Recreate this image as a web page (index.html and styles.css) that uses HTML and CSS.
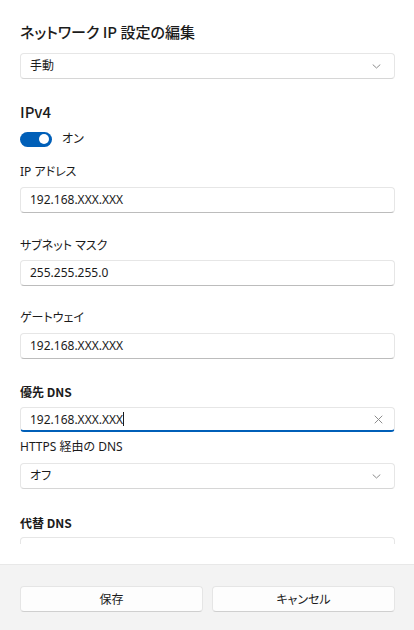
FILE: index.html
```html
<!DOCTYPE html>
<html lang="ja">
<head>
<meta charset="utf-8">
<link rel="stylesheet" href="styles.css">
</head>
<body>
<div class="dialog">
  <div class="scroll">
    <div class="content">
      <h1 class="title">ネットワーク IP 設定の編集</h1>
      <div class="combo mt9">
        <span>手動</span>
        <svg class="chev" width="9" height="5" viewBox="0 0 9 5"><path d="M1 0.8 L4.5 4 L8 0.8" fill="none" stroke="#8c8c8c" stroke-width="1" stroke-linecap="round" stroke-linejoin="round"/></svg>
      </div>
      <h2 class="section">IPv4</h2>
      <div class="toggle-row">
        <span class="toggle"><span class="knob"></span></span>
        <span class="toggle-text">オン</span>
      </div>
      <div class="label mt17">IP アドレス</div>
      <div class="field mt7">192.168.XXX.XXX</div>
      <div class="label mt25">サブネット マスク</div>
      <div class="field mt6">255.255.255.0</div>
      <div class="label mt24">ゲートウェイ</div>
      <div class="field mt7">192.168.XXX.XXX</div>
      <div class="label bold mt25">優先 DNS</div>
      <div class="field focused mt7">
        <span>192.168.XXX.XXX<span class="caret"></span></span>
        <svg class="clear" width="9" height="9" viewBox="0 0 9 9"><path d="M1 1 L8 8 M8 1 L1 8" fill="none" stroke="#8c8c8c" stroke-width="1" stroke-linecap="round"/></svg>
      </div>
      <div class="label mt7">HTTPS 経由の DNS</div>
      <div class="combo mt8">
        <span>オフ</span>
        <svg class="chev" width="9" height="5" viewBox="0 0 9 5"><path d="M1 0.8 L4.5 4 L8 0.8" fill="none" stroke="#8c8c8c" stroke-width="1" stroke-linecap="round" stroke-linejoin="round"/></svg>
      </div>
      <div class="label bold mt26">代替 DNS</div>
      <div class="field mt6"></div>
    </div>
  </div>
  <div class="spacer"></div>
  <div class="footer">
    <button class="btn">保存</button>
    <button class="btn">キャンセル</button>
  </div>
</div>
</body>
</html>
```

FILE: styles.css
```css
html, body {
  margin: 0;
  padding: 0;
  background: #ffffff;
}
body {
  font-family: "Noto Sans", "Noto Sans CJK JP", sans-serif;
  font-feature-settings: "palt";
  color: #1b1b1b;
  font-size: 12px;
}
.dialog {
  width: 414px;
  height: 630px;
  display: flex;
  flex-direction: column;
}
.scroll {
  height: 544px;
  overflow: hidden;
  flex: none;
}
.content {
  padding: 20px 19px 0 20px;
  display: flex;
  flex-direction: column;
}
.title {
  margin: 0;
  font-family: "Noto Sans CJK JP", sans-serif;
  font-size: 15px;
  line-height: 24px;
  font-weight: 500;
}
.section {
  margin: 23px 0 0 0;
  font-family: "Noto Sans CJK JP", sans-serif;
  font-size: 15px;
  line-height: 20px;
  font-weight: 500;
}
.combo, .field {
  box-sizing: border-box;
  height: 26px;
  border: 1px solid #e6e6e6;
  border-radius: 4px;
  background: #ffffff;
  display: flex;
  align-items: center;
  justify-content: space-between;
  padding: 0 13px 0 9px;
  line-height: 16px;
}
.combo {
  border-bottom-color: #d6d6d6;
}
.field {
  border-bottom-color: #bcbcbc;
}
.field.focused {
  height: 25px;
  border-bottom: 2px solid #005fb8;
  padding-right: 11px;
  padding-top: 1px;
}
.caret {
  display: inline-block;
  width: 1px;
  height: 14px;
  background: #1b1b1b;
  vertical-align: -2px;
}
.chev { flex: none; }
.clear { flex: none; }
.toggle-row {
  margin-top: 9px;
  display: flex;
  align-items: center;
  gap: 10px;
  height: 16px;
}
.toggle {
  width: 32px;
  height: 15px;
  border-radius: 8px;
  background: #005fb8;
  display: flex;
  align-items: center;
  justify-content: flex-end;
  padding-right: 3px;
  box-sizing: border-box;
}
.knob {
  width: 10px;
  height: 10px;
  border-radius: 50%;
  background: #ffffff;
}
.toggle-text { line-height: 16px; }
.label {
  line-height: 16px;
  font-size: 12px;
}
.bold {
  font-family: "Noto Sans CJK JP", sans-serif;
  font-weight: 700;
}
.mt6 { margin-top: 6px; }
.mt7 { margin-top: 7px; }
.mt8 { margin-top: 8px; }
.mt9 { margin-top: 9px; }
.mt17 { margin-top: 17px; }
.mt24 { margin-top: 24px; }
.mt25 { margin-top: 25px; }
.mt26 { margin-top: 26px; }
.spacer {
  height: 20px;
  flex: none;
}
.footer {
  flex: 1;
  background: #f3f3f3;
  border-top: 1px solid #e8e8e8;
  padding: 21px 19px 0 20px;
  display: flex;
  gap: 9px;
  align-items: flex-start;
}
.btn {
  flex: 1;
  height: 26px;
  box-sizing: border-box;
  border: 1px solid #e5e5e5;
  border-bottom-color: #cfcfcf;
  border-radius: 4px;
  background: #fdfdfd;
  font-family: "Noto Sans", "Noto Sans CJK JP", sans-serif;
  font-feature-settings: "palt";
  font-size: 12px;
  color: #1b1b1b;
  padding: 0;
}
```
